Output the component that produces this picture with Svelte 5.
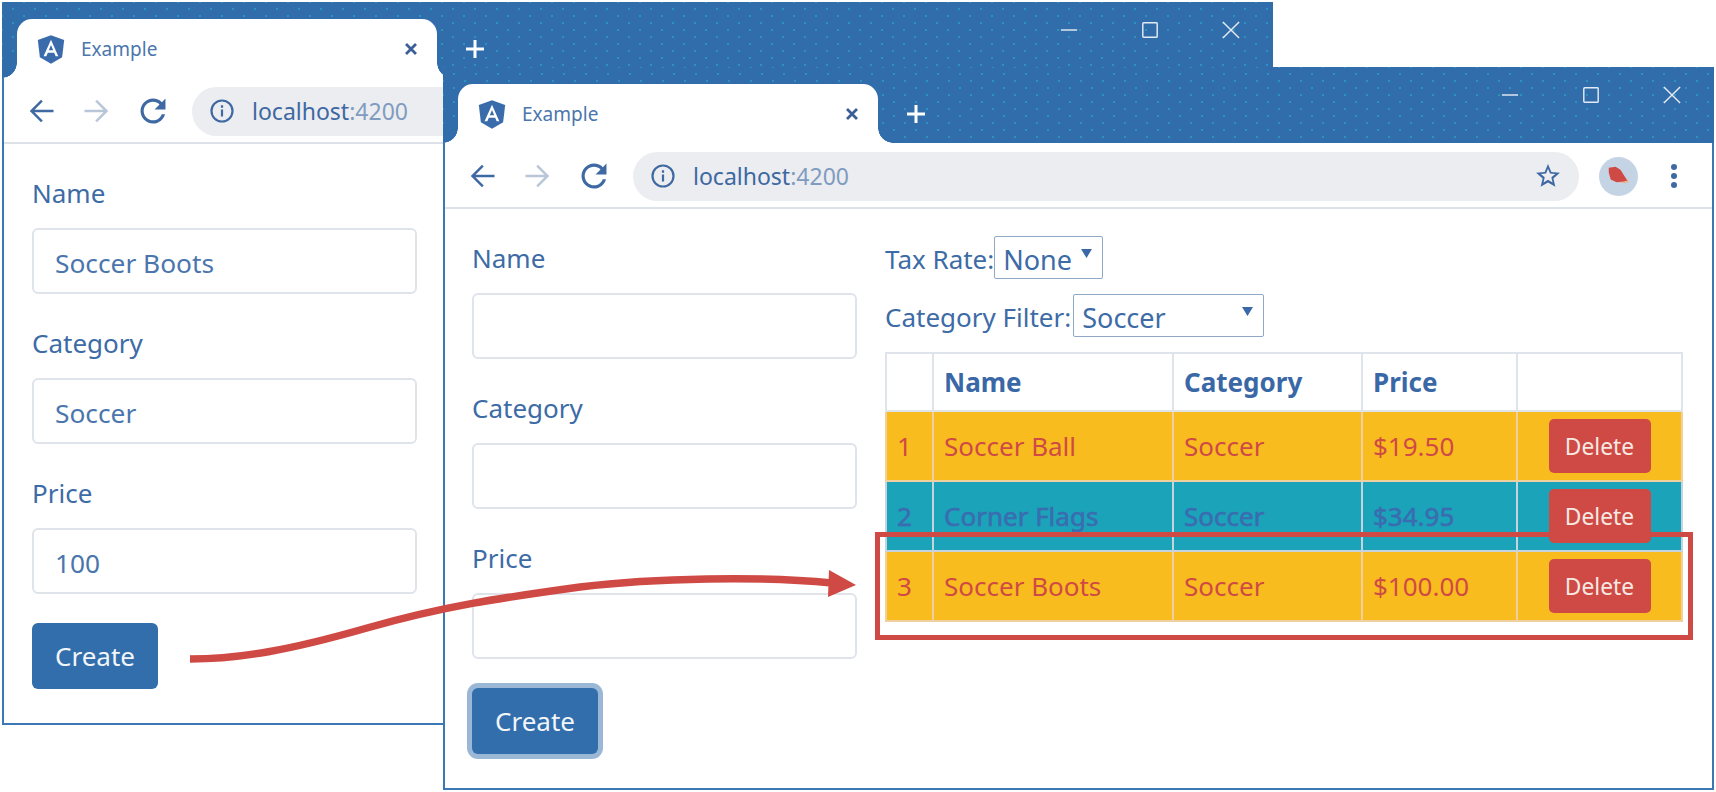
<script>
  const rows = [
    { id: 1, name: 'Soccer Ball', category: 'Soccer', price: '$19.50', kind: 'warm' },
    { id: 2, name: 'Corner Flags', category: 'Soccer', price: '$34.95', kind: 'cool' },
    { id: 3, name: 'Soccer Boots', category: 'Soccer', price: '$100.00', kind: 'warm' },
  ];
</script>

{#snippet field(label, value)}
  <div class="group">
    <label>
      <span class="label-text">{label}</span>
      <input type="text" {value} />
    </label>
  </div>
{/snippet}

{#snippet browser(kind, values)}
  <section class="window {kind}">
    <header class="titlebar">
      <div class="tab">
        <svg class="logo" viewBox="0 0 250 250">
          <path fill="#3a6cab" d="M125 18 22 55 38 190 125 240 212 190 228 55z" />
          <path fill="#fff" d="M125 52 66.800 182.600h21.700l11.700-29.200h49.400l11.700 29.200H182L125 52zm17 83.400h-34l17-40.900 17 40.900z" />
        </svg>
        <span class="tab-title">Example</span>
        <svg class="tab-close" viewBox="0 0 16 16"><path d="M3 3 13 13M13 3 3 13" /></svg>
      </div>
      <svg class="newtab" viewBox="0 0 20 20"><path d="M10 1v18M1 10h18" /></svg>
      <div class="controls">
        <svg viewBox="0 0 20 20"><path d="M1 10h18" /></svg>
        <svg viewBox="0 0 20 20"><rect x="2" y="2" width="16" height="16" rx="1" /></svg>
        <svg viewBox="0 0 20 20"><path d="M1 1 19 19M19 1 1 19" /></svg>
      </div>
    </header>

    <nav class="toolbar">
      <svg class="nav" viewBox="0 0 24 24"><path d="M22 11H6.800l6.600-6.600L12 3l-9 9 9 9 1.400-1.400L6.800 13H22z" /></svg>
      <svg class="nav off" viewBox="0 0 24 24"><path d="M2 11h15.200l-6.600-6.600L12 3l9 9-9 9-1.400-1.400 6.600-6.600H2z" /></svg>
      <svg class="nav reload" viewBox="0 0 24 24"><path d="M19.600 4.400C17.700 2.500 15 1.300 12 1.300 6.100 1.300 1.300 6.100 1.300 12S6.100 22.700 12 22.700c5 0 9.100-3.400 10.300-8h-2.800c-1.100 3.100-4.100 5.300-7.500 5.300-4.400 0-8-3.600-8-8s3.600-8 8-8c2.200 0 4.200.9 5.600 2.400L13.300 10.700h9.400V1.300z" /></svg>
      <div class="omnibox">
        <svg class="info" viewBox="0 0 24 24">
          <circle cx="12" cy="12" r="10.500" />
          <path d="M12 10.500v7M12 6.300v2.400" />
        </svg>
        <span class="url">localhost<span class="port">:4200</span></span>
        <svg class="star" viewBox="0 0 24 24"><path d="M23 9.100l-7.900-.7L12 1 8.900 8.400 1 9.100l6 5.200L5.200 22 12 17.900 18.800 22 17 14.300l6-5.200zM12 15.400l-4.100 2.500 1.100-4.700-3.600-3.100 4.800-.4L12 5.300l1.900 4.400 4.800.4-3.600 3.100 1.100 4.700L12 15.400z" /></svg>
      </div>
      <div class="avatar">
        <svg viewBox="0 0 40 40">
          <path fill="#e8b48f" d="M25 19 31 25 27 27 20 26z" />
          <path fill="#cf4a45" d="M10 11 17 10 22 13 27 21 29 24 25 25 18 26 12 23 10 16z" />
        </svg>
      </div>
      <div class="menu"><i></i><i></i><i></i></div>
    </nav>

    <div class="content">
      <form class="editor">
        {@render field('Name', values.name)}
        {@render field('Category', values.category)}
        {@render field('Price', values.price)}
        <button type="button" class="create">Create</button>
      </form>

      {#if kind === 'front'}
        <div class="products">
          <div class="filter">
            <span>Tax Rate:</span>
            <div class="pick tax">
              <select><option>None</option></select>
              <svg viewBox="0 0 10 8"><path d="M0 0h10L5 8z" /></svg>
            </div>
          </div>
          <div class="filter">
            <span>Category Filter:</span>
            <div class="pick cat">
              <select><option>Soccer</option></select>
              <svg viewBox="0 0 10 8"><path d="M0 0h10L5 8z" /></svg>
            </div>
          </div>
          <table>
            <colgroup>
              <col style="width: 47px" /><col style="width: 240px" /><col style="width: 189px" /><col style="width: 155px" /><col style="width: 165px" />
            </colgroup>
            <thead>
              <tr><th></th><th>Name</th><th>Category</th><th>Price</th><th></th></tr>
            </thead>
            <tbody>
              {#each rows as row}
                <tr class={row.kind}>
                  <td>{row.id}</td>
                  <td>{row.name}</td>
                  <td>{row.category}</td>
                  <td>{row.price}</td>
                  <td class="action"><button type="button" class="delete">Delete</button></td>
                </tr>
              {/each}
            </tbody>
          </table>
        </div>
      {/if}
    </div>
  </section>
{/snippet}

<main class="desktop">
  {@render browser('back', { name: 'Soccer Boots', category: 'Soccer', price: '100' })}
  {@render browser('front', { name: '', category: '', price: '' })}

  <div class="highlight"></div>
  <svg class="arrow" viewBox="0 0 1716 792">
    <path class="shaft" d="M190 659C240 659 290 650 367 628S500 598 580 587C655 578 760 576 832 583" />
    <path fill="#cf4a45" d="M829 570 856 585 828 597z" />
  </svg>
</main>

<style>
  :global(body) {
    background: #fff;
  }

  .desktop {
    position: relative;
    width: 1716px;
    height: 792px;
    overflow: hidden;
    font-family: "Noto Sans", sans-serif;
    color: #3d6ba6;
  }

  /* the two windows sit freely on the desktop */
  .window {
    position: absolute;
    display: flex;
    flex-direction: column;
    box-sizing: border-box;
    width: 1271px;
    height: 723px;
    background: #fff;
    border: 2px solid #3c78b6;
    border-top: none;
  }

  .back {
    left: 2px;
    top: 2px;
  }

  .front {
    left: 443px;
    top: 67px;
  }

  /* title bar */
  .titlebar {
    position: relative;
    display: flex;
    flex: none;
    align-items: flex-end;
    height: 76px;
    margin: 0 -2px;
    padding-left: 15px;
    background-color: #316dab;
    background-image:
      radial-gradient(circle, #2a93c0 0.7px, transparent 1px),
      radial-gradient(circle, #2a93c0 0.7px, transparent 1px);
    background-size: 22px 14px;
    background-position: 0 0, 11px 7px;
  }

  .tab {
    position: relative;
    display: flex;
    align-items: center;
    box-sizing: border-box;
    width: 420px;
    height: 59px;
    padding: 0 18px 0 18px;
    background: #fff;
    border-radius: 15px 15px 0 0;
  }

  .tab::before,
  .tab::after {
    content: "";
    position: absolute;
    bottom: 0;
    width: 15px;
    height: 15px;
  }

  .tab::before {
    left: -15px;
    background: radial-gradient(circle at 0 0, #316dab 14.500px, #fff 15px);
  }

  .tab::after {
    right: -15px;
    background: radial-gradient(circle at 100% 0, #316dab 14.500px, #fff 15px);
  }

  .logo {
    width: 32px;
    height: 32px;
    flex: none;
  }

  .tab-title {
    flex: 1;
    margin-left: 14px;
    font-size: 19px;
    color: #4a76ad;
  }

  .tab-close {
    width: 16px;
    height: 16px;
    fill: none;
    stroke: #3a5f98;
    stroke-width: 2.800;
  }

  .newtab {
    width: 20px;
    height: 20px;
    margin: 0 0 19px 28px;
    fill: none;
    stroke: #fff;
    stroke-width: 3;
  }

  .controls {
    position: absolute;
    top: 19px;
    right: 33px;
    display: flex;
    gap: 63px;
  }

  .controls svg {
    width: 18px;
    height: 18px;
    fill: none;
    stroke: #e6ebf2;
    stroke-width: 1.600;
  }

  /* toolbar */
  .toolbar {
    display: flex;
    flex: none;
    align-items: center;
    box-sizing: border-box;
    height: 66px;
    padding: 2px 35px 0 22px;
    border-bottom: 2px solid #dde2e9;
  }

  .nav {
    width: 30px;
    height: 30px;
    margin-right: 26px;
    fill: #3f69a3;
    flex: none;
  }

  .nav.off {
    fill: #b9c6d8;
  }

  .nav.reload {
    width: 28px;
    height: 28px;
    margin: 0 25px 0 1px;
  }

  .omnibox {
    display: flex;
    flex: 1;
    align-items: center;
    height: 49px;
    padding: 0 18px;
    border-radius: 25px;
    background: #ecedf0;
  }

  .info {
    width: 24px;
    height: 24px;
    flex: none;
    fill: none;
    stroke: #3f69a3;
    stroke-width: 2.200;
  }

  .url {
    flex: 1;
    margin-left: 18px;
    font-size: 23px;
    color: #3d68a2;
  }

  .port {
    color: #7f9cc0;
  }

  .star {
    width: 26px;
    height: 26px;
    fill: #3f69a3;
  }

  .avatar {
    width: 39px;
    height: 39px;
    margin-left: 20px;
    border-radius: 50%;
    background: #c5d4e5;
  }

  .avatar svg {
    display: block;
    width: 39px;
    height: 39px;
  }

  .menu {
    display: flex;
    flex-direction: column;
    gap: 3px;
    margin-left: 33px;
  }

  .menu i {
    display: block;
    width: 6px;
    height: 6px;
    border-radius: 50%;
    background: #3f69a3;
  }

  /* page */
  .content {
    display: flex;
    flex: 1;
    min-height: 0;
    padding: 27px 30px 0 27px;
    gap: 28px;
  }

  .back .content {
    padding-left: 28px;
  }

  .editor {
    width: 385px;
    flex: none;
    padding-top: 2px;
  }

  .group {
    margin-bottom: 29px;
  }

  label {
    display: block;
  }

  .label-text {
    display: block;
    height: 40px;
    margin-bottom: 15px;
    font-size: 26px;
    line-height: 40px;
  }

  input {
    display: block;
    box-sizing: border-box;
    width: 100%;
    height: 66px;
    padding: 3px 21px 0;
    border: 2px solid #dfe3ea;
    border-radius: 6px;
    font: inherit;
    font-size: 26.300px;
    color: #4a76ad;
    background: #fff;
  }

  .create {
    display: block;
    width: 126px;
    height: 66px;
    border: none;
    border-radius: 6px;
    background: #326eac;
    color: #f2f5f9;
    font: inherit;
    font-size: 26px;
  }

  .front .create {
    box-shadow: 0 0 0 5px #9ab8d6;
  }

  .products {
    flex: 1;
  }

  .filter {
    display: flex;
    align-items: center;
    gap: 2px;
    height: 43px;
    margin-bottom: 15px;
    font-size: 26px;
  }

  .filter span {
    padding-top: 2px;
  }

  .pick {
    position: relative;
  }

  .pick.tax {
    margin-left: -2px;
  }

  .pick svg {
    position: absolute;
    top: 13px;
    right: 11px;
    width: 11px;
    height: 9px;
    fill: #3a68a8;
  }

  select {
    display: block;
    box-sizing: border-box;
    height: 43px;
    padding: 3px 0 0 8px;
    border: 1.500px solid #8ea8c6;
    border-radius: 2px;
    appearance: none;
    background: #fff;
    font: inherit;
    font-size: 27px;
    color: #3d6ba6;
  }

  .tax select {
    width: 109px;
  }

  .cat select {
    width: 191px;
  }

  table {
    width: 796px;
    table-layout: fixed;
    border-collapse: collapse;
    font-size: 26px;
  }

  th,
  td {
    padding: 0 0 0 10px;
    border: 2px solid #dfe3ea;
    text-align: left;
  }

  th {
    height: 56px;
    font-weight: 700;
    color: #3a68a6;
  }

  td {
    height: 68px;
  }

  .warm td {
    background: #f9bc1e;
    color: #cf4a45;
    border-color: #f0cfa0;
  }

  .cool td {
    background: #1ba3ba;
    color: #3a6db0;
    -webkit-text-stroke: 0.6px #3a6db0;
    border-color: #c5d3df;
  }

  td.action {
    padding: 0;
    text-align: center;
  }

  .delete {
    display: inline-block;
    width: 102px;
    height: 54px;
    vertical-align: middle;
    border: none;
    border-radius: 5px;
    background: #cf4a45;
    color: #f5e9e2;
    -webkit-text-stroke: 0;
    font: inherit;
    font-size: 22.800px;
    font-weight: 400;
  }

  /* annotation laid over the windows */
  .highlight {
    position: absolute;
    left: 875px;
    top: 532px;
    box-sizing: border-box;
    width: 818px;
    height: 108px;
    border: 5px solid #cf4a45;
  }

  .arrow {
    position: absolute;
    left: 0;
    top: 0;
    width: 1716px;
    height: 792px;
    pointer-events: none;
  }

  .shaft {
    fill: none;
    stroke: #cf4a45;
    stroke-width: 7.500;
  }
</style>
